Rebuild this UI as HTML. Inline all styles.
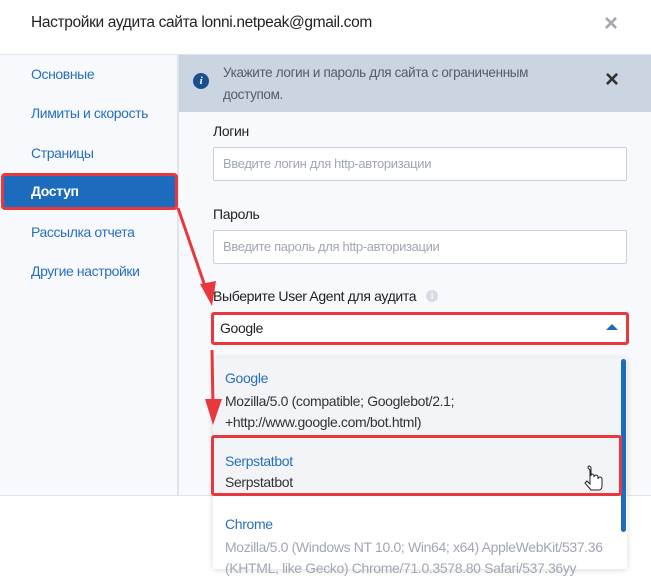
<!DOCTYPE html>
<html><head><meta charset="utf-8"><style>
*{margin:0;padding:0;box-sizing:border-box}
body{width:651px;height:569px;overflow:hidden;position:relative;font-family:"Liberation Sans",sans-serif;background:#fff;color:#222;letter-spacing:-0.35px}
.a{position:absolute}
.side a{position:absolute;left:31px;font-size:14px;color:#2670bf;text-decoration:none;letter-spacing:-0.4px}
.lbl{font-size:14px;color:#222}
.inp{background:#fff;border:1px solid #ccd1da;border-radius:2px;font-size:13px;color:#a0a6b4;padding-left:9px;line-height:31px}
</style></head><body>
<div class="a" style="left:31px;top:14px;font-size:15.5px;color:#222">Настройки аудита сайта lonni.netpeak@gmail.com</div>
<div class="a" style="left:604px;top:10px;font-size:24px;color:#a3a8b2;font-weight:bold">×</div>
<div class="a" style="left:0;top:54px;width:651px;height:442px;background:#f8f9fc;border-top:1px solid #dfe4ec"></div>
<div class="a" style="left:177px;top:55px;width:2px;height:441px;background:#dfe4ec"></div>
<div class="a" style="left:179px;top:55px;width:472px;height:57px;background:#cbd4e1"></div>
<div class="a" style="left:193px;top:73px;width:16px;height:16px;border-radius:50%;background:#1a4f8f;color:#fff;font-size:11px;font-weight:bold;font-style:italic;text-align:center;line-height:16px;font-family:'Liberation Serif',serif">i</div>
<div class="a" style="left:223px;top:62px;font-size:13.5px;color:#555c68;line-height:22px">Укажите логин и пароль для сайта с ограниченным<br>доступом.</div>
<div class="a" style="left:605px;top:66px;font-size:24px;color:#333;font-weight:bold">×</div>
<div class="side">
<a style="top:66px">Основные</a>
<a style="top:105px">Лимиты и скорость</a>
<a style="top:145px">Страницы</a>
<a style="top:224px">Рассылка отчета</a>
<a style="top:263px">Другие настройки</a>
</div>
<div class="a" style="left:1px;top:173px;width:177px;height:37px;background:#1c6bbd;border:3px solid #e8383d;border-radius:4px"></div>
<div class="a" style="left:31px;top:183px;font-size:14px;color:#fff;font-weight:bold">Доступ</div>
<div class="a lbl" style="left:213px;top:123px">Логин</div>
<div class="a inp" style="left:213px;top:147px;width:414px;height:34px">Введите логин для http-авторизации</div>
<div class="a lbl" style="left:213px;top:206px">Пароль</div>
<div class="a inp" style="left:213px;top:230px;width:414px;height:34px">Введите пароль для http-авторизации</div>
<div class="a lbl" style="left:213px;top:288px">Выберите User Agent для аудита</div>
<div class="a" style="left:426px;top:290px;width:12px;height:12px;border-radius:50%;background:#d5dae3;color:#fff;font-size:9px;text-align:center;line-height:12px;font-weight:bold">i</div>
<div class="a" style="left:211px;top:312px;width:418px;height:33px;background:#fff;border:3px solid #e8383d;border-radius:3px"></div>
<div class="a" style="left:220px;top:320px;font-size:14px;color:#222">Google</div>
<div class="a" style="left:606px;top:324px;width:0;height:0;border-left:6px solid transparent;border-right:6px solid transparent;border-bottom:6px solid #1c6bbd"></div>
<div class="a" style="left:0;top:495px;width:651px;height:1px;background:#dfe4ec"></div>
<div class="a" style="left:213px;top:358px;width:414px;height:211px;background:#fff;box-shadow:0 1px 6px rgba(0,0,0,.15)"></div>
<div class="a" style="left:213px;top:358px;width:414px;height:137px;background:#f3f4f8"></div>
<div class="a" style="left:621px;top:359px;width:5px;height:173px;background:#1c6bbd;border-radius:3px"></div>
<div class="a" style="left:225px;top:370px;font-size:14px;color:#2670bf">Google</div>
<div class="a" style="left:225px;top:391px;font-size:14px;color:#333;line-height:21px">Mozilla/5.0 (compatible; Googlebot/2.1;<br>+http://www.google.com/bot.html)</div>
<div class="a" style="left:211px;top:435px;width:411px;height:61px;border:3px solid #e8383d;border-radius:3px"></div>
<div class="a" style="left:225px;top:453px;font-size:14px;color:#2670bf">Serpstatbot</div>
<div class="a" style="left:225px;top:474px;font-size:14px;color:#333">Serpstatbot</div>
<div class="a" style="left:225px;top:516px;font-size:14px;color:#2670bf">Chrome</div>
<div class="a" style="left:225px;top:537px;font-size:14px;color:#a0a6b4;line-height:21px;white-space:nowrap">Mozilla/5.0 (Windows NT 10.0; Win64; x64) AppleWebKit/537.36<br>(KHTML, like Gecko) Chrome/71.0.3578.80 Safari/537.36yy</div>
<svg class="a" style="left:0;top:0" width="651" height="569">
<line x1="178" y1="208" x2="207" y2="292" stroke="#e8383d" stroke-width="3"/>
<polygon points="200,284 212,306 216,281" fill="#e8383d"/>
<line x1="212" y1="350" x2="213" y2="405" stroke="#e8383d" stroke-width="3"/>
<polygon points="205,399 213,425 222,399" fill="#e8383d"/>
<path d="M590 470v14l-3-3-2 2 6 7h8c2 0 3-2 3-4v-7c0-1-1-2-2-2s-2 1-2 2v-2c0-1-1-2-2-2s-2 1-2 2v-1c0-1-1-2-2-2s-1 1-1 2v-8c0-1-1-2-2-2s-1 1-1 2z" fill="#fff" stroke="#222" stroke-width="1"/>
</svg>
</body></html>
